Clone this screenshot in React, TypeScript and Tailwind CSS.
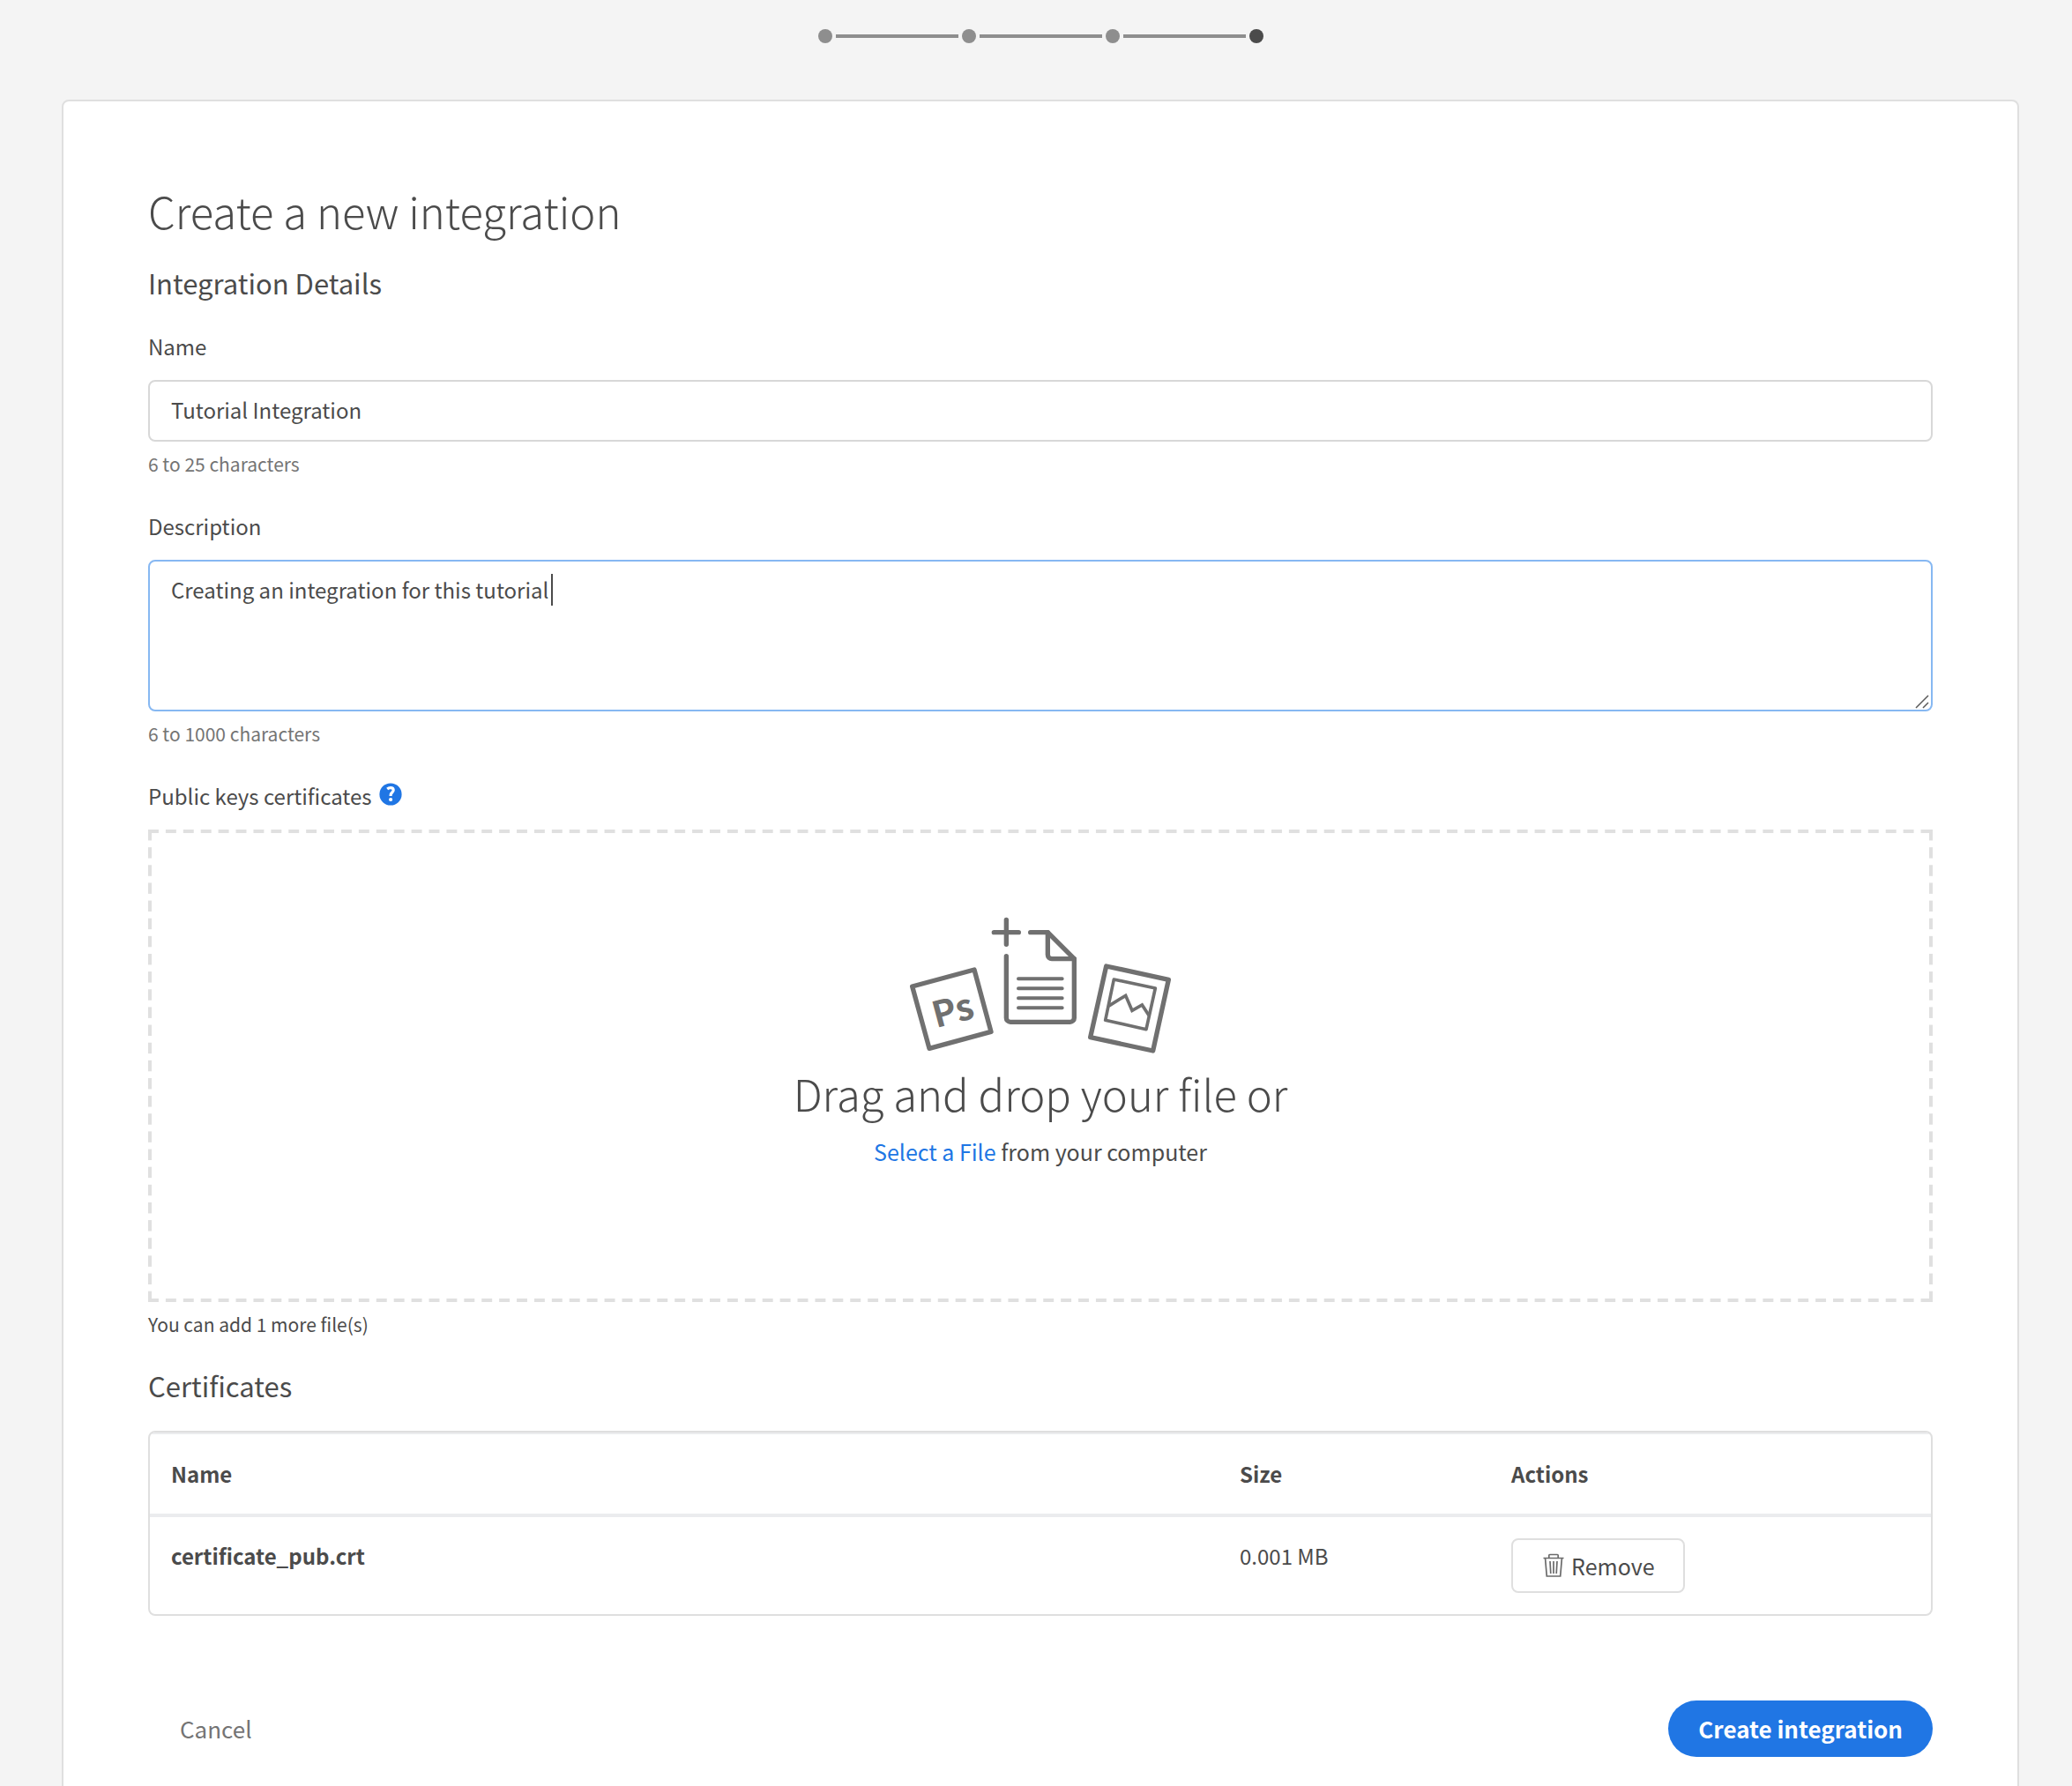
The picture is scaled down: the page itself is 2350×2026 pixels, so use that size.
import type { ReactNode } from "react";

function Stepper() {
  return (
    <ol className="flex items-center justify-center gap-1" aria-label="Progress">
      {[0, 1, 2].map((step) => (
        <li key={step} className="flex items-center gap-1">
          <span className="size-4 rounded-full bg-[#8e8e8e]" />
          <span className="h-1 w-[139px] bg-[#8e8e8e]" />
        </li>
      ))}
      <li className="size-4 rounded-full bg-[#4b4b4b]" aria-current="step" />
    </ol>
  );
}

function SectionTitle({ children }: { children: ReactNode }) {
  return <h2 className="mt-[34px] text-[31px] leading-10">{children}</h2>;
}

function HelpIcon() {
  return (
    <svg viewBox="0 0 26 26" className="size-[26px]" aria-hidden="true">
      <circle cx="13" cy="13" r="12.6" fill="#2076e4" />
      <path
        d="M9.2 6.900C10.300 6 11.600 5.600 12.900 5.600c2 0 3.300 1 3.300 2.700 0 1.500-.8 2.200-1.700 3-.9.8-1.400 1.400-1.400 2.700v.9"
        fill="none"
        stroke="#fff"
        strokeWidth="3.2"
      />
      <circle cx="13.100" cy="19" r="2.100" fill="#fff" />
    </svg>
  );
}

function TrashIcon() {
  return (
    <svg viewBox="0 0 24 28" className="h-7 w-6" fill="none" stroke="#6b6b6b" strokeWidth="1.7" aria-hidden="true">
      <path d="M0.500 5.500H23.500M6.800 5V2.500a1 1 0 0 1 1-1h8.400a1 1 0 0 1 1 1V5" />
      <path d="M2.600 6l1.700 20h15.400l1.700-20" />
      <path d="M8 9l.8 14M12 9v14M16 9l-.8 14" />
    </svg>
  );
}

function DropIllustration() {
  return (
    <svg
      viewBox="90 60 900 468"
      className="h-[156px] w-[300px]"
      fill="none"
      stroke="#707070"
      strokeWidth="16"
      strokeLinecap="round"
      strokeLinejoin="round"
      aria-hidden="true"
    >
      <path d="M424 70V154M382 113H466" />
      <path d="M506 113H565L655 203V404a14 14 0 0 1-14 14H438a14 14 0 0 1-14-14V194" />
      <path d="M565 113V189a14 14 0 0 0 14 14H655" />
      <path d="M465 271H614M465 304H614M465 337H614M465 370H614" strokeWidth="12" />
      <path d="M104 297L315 240L372 451L162 508Z" />
      <path d="M764 228L976 274L923 516L710 470Z" />
      <path d="M790 273L931 303L900 443L761 412Z" strokeWidth="11" />
      <path d="M775 362L830 328L852 379L886 360L908 394" strokeWidth="11" strokeLinejoin="miter" />
      <text
        transform="translate(185 439) rotate(-15)"
        fill="#707070"
        stroke="none"
        className="font-['Noto_Sans_CJK_JP',sans-serif] text-[122px] font-bold"
      >
        Ps
      </text>
    </svg>
  );
}

export default function App() {
  return (
    <div className="h-screen overflow-hidden bg-[#f4f4f4] pt-[33px] pr-[60px] pl-[70px] font-['Noto_Sans_CJK_JP',sans-serif] text-[24px] leading-9 text-[#4b4b4b]">
      <Stepper />
      <main className="mt-16 rounded-lg border-2 border-[#dfdfdf] bg-white p-24">
        <form onSubmit={(e) => e.preventDefault()}>
          <h1 className="text-[49px] leading-14 font-light">Create a new integration</h1>
          <SectionTitle>Integration Details</SectionTitle>

          <div className="mt-[34px] flex flex-col">
            <label htmlFor="name">Name</label>
            <input
              id="name"
              type="text"
              defaultValue="Tutorial Integration"
              className="mt-5 h-[70px] rounded-lg border-2 border-[#d8d8d8] bg-white px-6 pb-1 outline-none"
            />
            <p className="mt-[9px] text-[21px] leading-8 text-[#747474]">6 to 25 characters</p>
          </div>

          <div className="mt-[37px] flex flex-col">
            <label htmlFor="description">Description</label>
            <div className="relative mt-5 flex">
              <textarea
                id="description"
                defaultValue="Creating an integration for this tutorial"
                className="h-[172px] w-full resize-none rounded-lg border-2 border-[#87b8f2] bg-white px-6 py-[14px] outline-none"
              />
              <span className="absolute top-4 left-[457px] h-9 w-0.5 bg-[#4b4b4b]" />
              <svg viewBox="0 0 16 16" className="absolute right-1 bottom-[3px] size-4" stroke="#5a5a5a" strokeWidth="1.500" aria-hidden="true">
                <path d="M1 15L15 1M9 15L15 9" />
              </svg>
            </div>
            <p className="mt-[9px] text-[21px] leading-8 text-[#747474]">6 to 1000 characters</p>
          </div>

          <div className="mt-[37px] flex items-center gap-2">
            <label htmlFor="certificate">Public keys certificates</label>
            <button type="button" aria-label="Help" className="pb-1">
              <HelpIcon />
            </button>
          </div>
          <div className="mt-5 flex min-h-[536px] flex-col items-center bg-[linear-gradient(90deg,#e0e0e0_12px,transparent_12px),linear-gradient(90deg,#e0e0e0_12px,transparent_12px),linear-gradient(180deg,#e0e0e0_12px,transparent_12px),linear-gradient(180deg,#e0e0e0_12px,transparent_12px)] [background-position:0_0,0_100%,0_0,100%_0] [background-repeat:repeat-x,repeat-x,repeat-y,repeat-y] [background-size:calc((100%_-_12px)/101)_4px,calc((100%_-_12px)/101)_4px,4px_calc((100%_-_12px)/26),4px_calc((100%_-_12px)/26)] pt-[99px]">
            <DropIllustration />
            <p className="mt-4 text-[49px] leading-14 font-light">Drag and drop your file or</p>
            <p className="mt-5 text-[25px]">
              <a href="#certificate" className="text-[#2076e4]">
                Select a File
              </a>{" "}
              from your computer
            </p>
            <input id="certificate" type="file" className="sr-only" />
          </div>
          <p className="mt-[9px] text-[21px] leading-8">You can add 1 more file(s)</p>

          <SectionTitle>Certificates</SectionTitle>
          <div className="mt-[31px] overflow-hidden rounded-lg border-2 border-[#dfdfdf]">
            <table className="w-full table-fixed border-separate border-spacing-0 text-left">
              <colgroup>
                <col className="w-3/5" />
                <col />
                <col className="w-[24.75%]" />
              </colgroup>
              <thead>
                <tr>
                  <th className="h-24 border-t-2 border-b-4 border-[#ebecee] px-6 font-bold">Name</th>
                  <th className="h-24 border-t-2 border-b-4 border-[#ebecee] px-6 font-bold">Size</th>
                  <th className="h-24 border-t-2 border-b-4 border-[#ebecee] px-6 font-bold">Actions</th>
                </tr>
              </thead>
              <tbody>
                <tr className="align-top">
                  <th scope="row" className="px-6 pt-[26px] font-bold">certificate_pub.crt</th>
                  <td className="px-6 pt-[26px]">0.001 MB</td>
                  <td className="p-6">
                    <button type="button" className="flex h-[62px] items-center gap-2 rounded-lg border-2 border-[#dfdfdf] pr-8 pl-[34px] text-[25px]">
                      <TrashIcon />
                      Remove
                    </button>
                  </td>
                </tr>
              </tbody>
            </table>
          </div>

          <div className="mt-24 flex items-center justify-between">
            <button type="button" className="h-16 px-9 text-[26px] text-[#747474]">
              Cancel
            </button>
            <button type="submit" className="h-16 rounded-full bg-[#2076e4] px-[34px] text-[26px] font-bold text-white">
              Create integration
            </button>
          </div>
        </form>
      </main>
    </div>
  );
}
